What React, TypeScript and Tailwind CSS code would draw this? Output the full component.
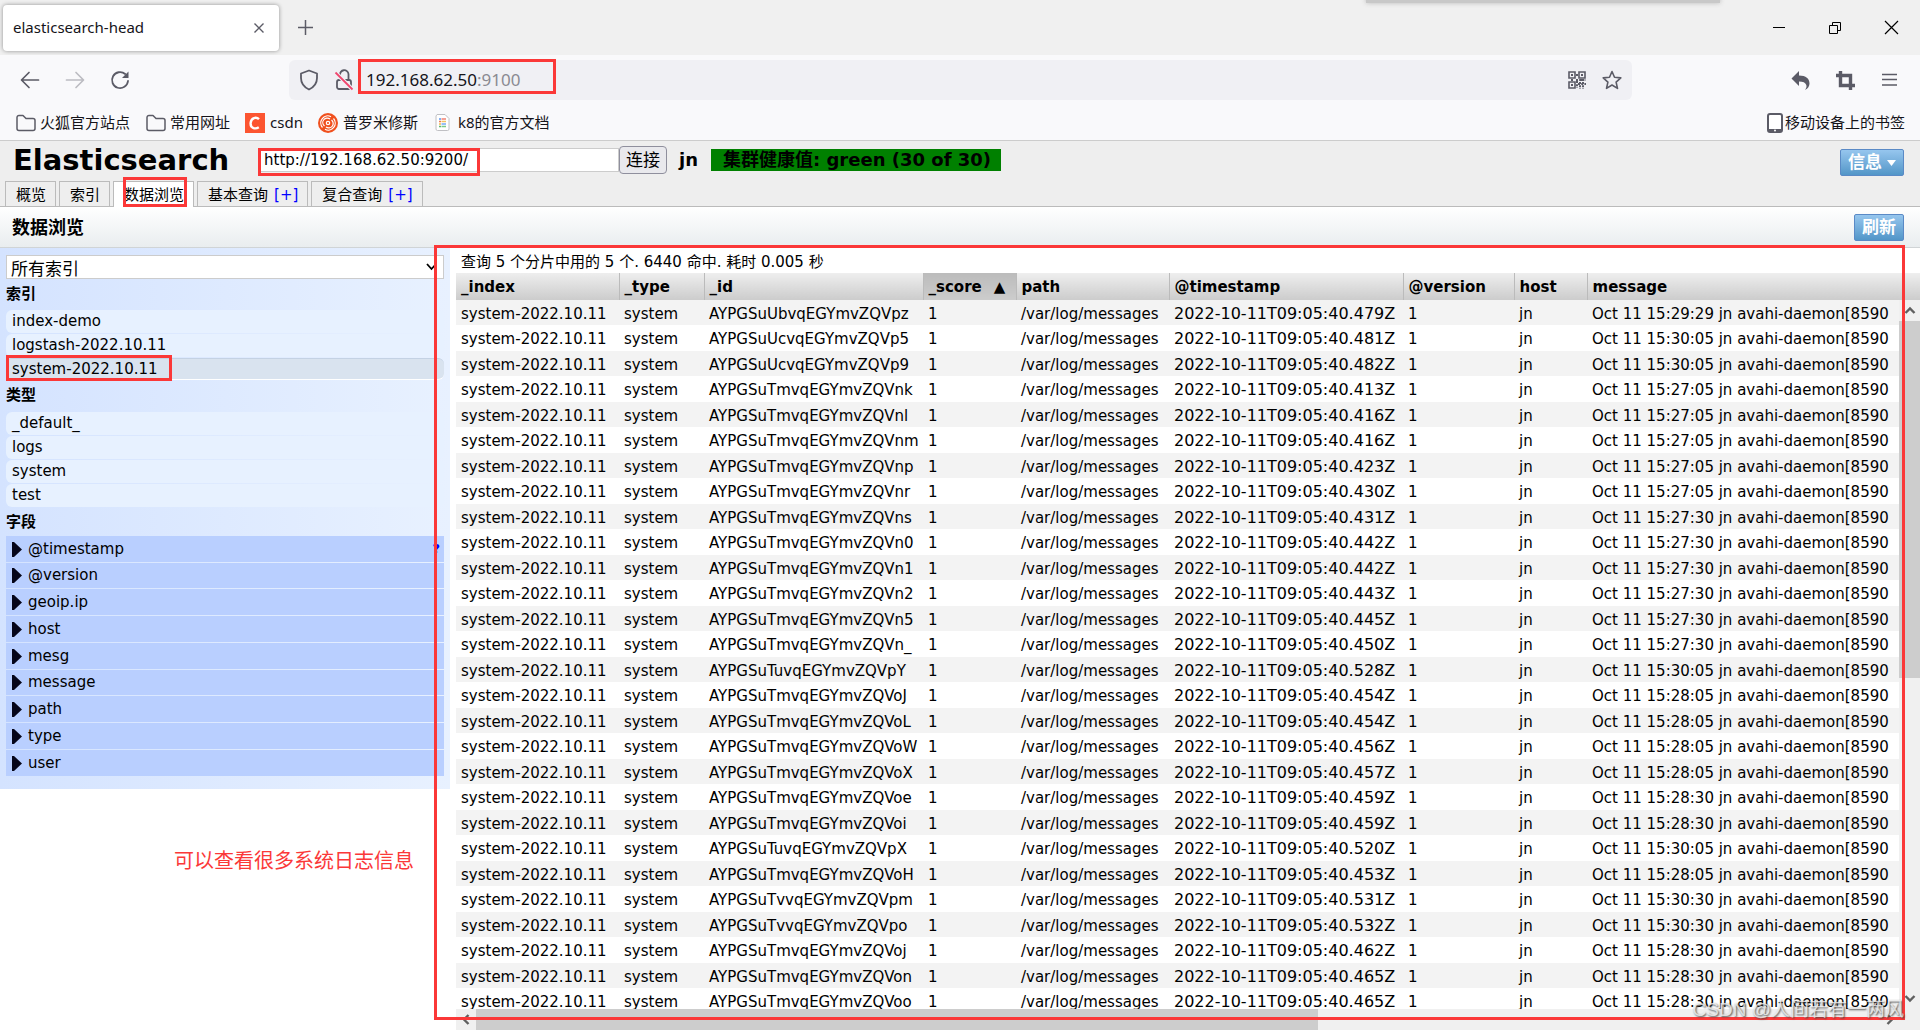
import type { ReactNode } from 'react';

const INDICES = ['index-demo', 'logstash-2022.10.11', 'system-2022.10.11'];
const TYPES = ['_default_', 'logs', 'system', 'test'];
const FIELDS = ['@timestamp', '@version', 'geoip.ip', 'host', 'mesg', 'message', 'path', 'type', 'user'];

// [id suffix, milliseconds part of @timestamp, time in the log line]
const HITS: [string, string, string][] = [
  ['UbvqEGYmvZQVpz', '479', '15:29:29'],
  ['UcvqEGYmvZQVp5', '481', '15:30:05'],
  ['UcvqEGYmvZQVp9', '482', '15:30:05'],
  ['TmvqEGYmvZQVnk', '413', '15:27:05'],
  ['TmvqEGYmvZQVnl', '416', '15:27:05'],
  ['TmvqEGYmvZQVnm', '416', '15:27:05'],
  ['TmvqEGYmvZQVnp', '423', '15:27:05'],
  ['TmvqEGYmvZQVnr', '430', '15:27:05'],
  ['TmvqEGYmvZQVns', '431', '15:27:30'],
  ['TmvqEGYmvZQVn0', '442', '15:27:30'],
  ['TmvqEGYmvZQVn1', '442', '15:27:30'],
  ['TmvqEGYmvZQVn2', '443', '15:27:30'],
  ['TmvqEGYmvZQVn5', '445', '15:27:30'],
  ['TmvqEGYmvZQVn_', '450', '15:27:30'],
  ['TuvqEGYmvZQVpY', '528', '15:30:05'],
  ['TmvqEGYmvZQVoJ', '454', '15:28:05'],
  ['TmvqEGYmvZQVoL', '454', '15:28:05'],
  ['TmvqEGYmvZQVoW', '456', '15:28:05'],
  ['TmvqEGYmvZQVoX', '457', '15:28:05'],
  ['TmvqEGYmvZQVoe', '459', '15:28:30'],
  ['TmvqEGYmvZQVoi', '459', '15:28:30'],
  ['TuvqEGYmvZQVpX', '520', '15:30:05'],
  ['TmvqEGYmvZQVoH', '453', '15:28:05'],
  ['TvvqEGYmvZQVpm', '531', '15:30:30'],
  ['TvvqEGYmvZQVpo', '532', '15:30:30'],
  ['TmvqEGYmvZQVoj', '462', '15:28:30'],
  ['TmvqEGYmvZQVon', '465', '15:28:30'],
  ['TmvqEGYmvZQVoo', '465', '15:28:30'],
];

function Mark({ className }: { className: string }) {
  return <div aria-hidden className={`pointer-events-none absolute border-3 border-[#fb3838] ${className}`} />;
}

function IconButton({ label, className = '', children }: { label: string; className?: string; children: ReactNode }) {
  return (
    <button aria-label={label} className={`flex shrink-0 items-center justify-center text-[#5b5b66] ${className}`}>
      {children}
    </button>
  );
}

function TabStrip() {
  return (
    <div className="relative flex h-[55px] shrink-0 items-center bg-[#f0f0f0] px-[3px]">
      <div className="absolute top-[-5px] right-[200px] h-2 w-[354px] bg-[#c8c8c8] shadow-[0_0_5px_#bbb]" />
      <div className="flex h-[46px] w-[276px] items-center justify-between rounded bg-white pr-[14px] pl-[10px] shadow-[0_0_4px_rgba(0,0,0,0.4)]">
        <span className="text-[15px] text-[#15141a]">elasticsearch-head</span>
        <IconButton label="关闭标签页">
          <svg width="12" height="12" viewBox="0 0 12 12" fill="none" stroke="currentColor" strokeWidth="1.4">
            <path d="M1.5 1.5l9 9M10.5 1.5l-9 9" />
          </svg>
        </IconButton>
      </div>
      <IconButton label="新标签页" className="ml-[18px]">
        <svg width="17" height="17" viewBox="0 0 17 17" fill="none" stroke="currentColor" strokeWidth="1.5">
          <path d="M8.5 1v15M1 8.5h15" />
        </svg>
      </IconButton>
      <div className="mr-[18px] ml-auto flex items-center gap-[42px]">
        <IconButton label="最小化" className="text-black!">
          <svg width="14" height="14" viewBox="0 0 14 14" stroke="currentColor"><path d="M1 6.500h12" /></svg>
        </IconButton>
        <IconButton label="还原" className="text-black!">
          <svg width="14" height="14" viewBox="0 0 14 14" fill="none" stroke="currentColor">
            <path d="M1.500 4.500h8v8h-8zM4.500 4.500v-3h8v8h-3" />
          </svg>
        </IconButton>
        <IconButton label="关闭" className="text-black!">
          <svg width="15" height="15" viewBox="0 0 15 15" fill="none" stroke="currentColor" strokeWidth="1.200">
            <path d="M1 1l13 13M14 1L1 14" />
          </svg>
        </IconButton>
      </div>
    </div>
  );
}

function AddressBar() {
  return (
    <div className="relative flex h-[50px] shrink-0 items-center bg-[#f9f9fb] pr-[21px] pl-5">
      <IconButton label="后退">
        <svg width="20" height="20" viewBox="0 0 20 20" fill="none" stroke="currentColor" strokeWidth="1.700" strokeLinecap="round" strokeLinejoin="round">
          <path d="M18.500 10H2M9 2.500L1.500 10 9 17.500" />
        </svg>
      </IconButton>
      <IconButton label="前进" className="ml-[25px] text-[#bcbcc2]!">
        <svg width="20" height="20" viewBox="0 0 20 20" fill="none" stroke="currentColor" strokeWidth="1.700" strokeLinecap="round" strokeLinejoin="round">
          <path d="M1.500 10H18M11 2.500l7.500 7.500-7.500 7.500" />
        </svg>
      </IconButton>
      <IconButton label="刷新页面" className="ml-[25px]">
        <svg width="20" height="20" viewBox="0 0 20 20" fill="none" stroke="currentColor" strokeWidth="1.800" strokeLinecap="round">
          <path d="M18 11a8 8 0 1 1-2.800-7" />
          <path d="M18.500 1.500v6.500h-6.500z" fill="currentColor" stroke="none" />
        </svg>
      </IconButton>
      <div className="ml-[159px] flex h-10 flex-1 items-center rounded-md bg-[#f0f0f4] px-[10px]">
        <IconButton label="跟踪保护">
          <svg width="20" height="22" viewBox="0 0 20 22" fill="none" stroke="currentColor" strokeWidth="1.800" strokeLinejoin="round">
            <path d="M10 1.500l8 3v4.500c0 5-2.800 9-8 11.500C4.800 18 2 14 2 9V4.500z" />
          </svg>
        </IconButton>
        <IconButton label="连接不安全" className="ml-[15px]">
          <svg width="20" height="22" viewBox="0 0 20 22" fill="none" stroke="currentColor" strokeWidth="1.800">
            <rect x="3" y="11" width="14" height="9" rx="2" />
            <path d="M6 11V6a4 4 0 0 1 8.500-1v6" />
            <path d="M1.500 3.500L18.500 20.500" stroke="#f0f0f4" strokeWidth="4" />
            <path d="M1.500 3.500L18.500 20.500" stroke="#f0466e" />
          </svg>
        </IconButton>
        <p className="ml-3 flex-1 text-[17px] text-[#15141a]">
          192.168.62.50<span className="text-[#8a8a92]">:9100</span>
        </p>
        <IconButton label="二维码">
          <svg width="18" height="18" viewBox="0 0 18 18" fill="none" stroke="currentColor" strokeWidth="1.600">
            <path d="M1 1h6v6H1zM11 1h6v6h-6zM1 11h6v6H1z" />
            <path d="M3 4h2M13 4h2M3 14h2M8 4h2M4 8v2M8 9h10M14 8v2M9 10v7M10 13h8M12 11v7M15 11v7" strokeWidth="2" strokeDasharray="2 1.200" />
          </svg>
        </IconButton>
        <IconButton label="收藏" className="ml-4">
          <svg width="20" height="20" viewBox="0 0 20 20" fill="none" stroke="currentColor" strokeWidth="1.600" strokeLinejoin="round">
            <path d="M10 1.500l2.500 5.800 6.300.6-4.700 4.200 1.400 6.300L10 15l-5.500 3.400 1.400-6.300L1.200 7.900l6.300-.6z" />
          </svg>
        </IconButton>
      </div>
      <div className="ml-[159px] flex items-center gap-[26px]">
        <IconButton label="撤销">
          <svg width="19" height="19" viewBox="0 0 19 19" fill="currentColor">
            <path d="M8 0v4.500c7 0 10.500 3 10.500 8 0 2.500-1.500 5-4.500 6.500 1.500-2 1.800-3.500 1.300-5C14.500 11.500 12 10.500 8 10.500V15L.5 7.500z" />
          </svg>
        </IconButton>
        <IconButton label="截图">
          <svg width="19" height="19" viewBox="0 0 19 19" fill="none" stroke="currentColor" strokeWidth="3.400">
            <path d="M4.500 0v14.500H19M0 4.500h14.500V19" />
          </svg>
        </IconButton>
        <IconButton label="菜单">
          <svg width="18" height="18" viewBox="0 0 18 18" stroke="currentColor" strokeWidth="1.500">
            <path d="M1 3.500h15M1 8.500h15M1 14h15" />
          </svg>
        </IconButton>
      </div>
      <Mark className="top-1 left-[358px] h-[35px] w-[198px]" />
    </div>
  );
}

function Folder() {
  return (
    <svg width="20" height="18" viewBox="0 0 20 18" fill="none" stroke="#5b5b66" strokeWidth="1.500" strokeLinejoin="round">
      <path d="M1 3.500a2 2 0 0 1 2-2h4l3 3h7a2 2 0 0 1 2 2V14.500a2 2 0 0 1-2 2H3a2 2 0 0 1-2-2z" />
    </svg>
  );
}

function BookmarkBar() {
  return (
    <nav aria-label="书签" className="flex h-[35px] shrink-0 items-center bg-[#f9f9fb] pr-[15px] pl-4 text-[15px] text-[#15141a]">
      <a href="#" className="flex items-center gap-1"><Folder />火狐官方站点</a>
      <a href="#" className="ml-4 flex items-center gap-1"><Folder />常用网址</a>
      <a href="#" className="ml-[15px] flex items-center gap-[5px]">
        <svg width="20" height="20" viewBox="0 0 20 20">
          <rect width="20" height="20" fill="#fc5531" />
          <path d="M14 6.200C11.500 3.800 6 4.200 5.600 10.200c-.2 5.600 5.200 6 8.200 4" fill="none" stroke="#fff" strokeWidth="2.400" />
        </svg>
        csdn
      </a>
      <a href="#" className="ml-[15px] flex items-center gap-[5px]">
        <svg width="20" height="20" viewBox="0 0 20 20" fill="none" stroke="#fff" strokeWidth="1.200">
          <circle cx="10" cy="10" r="10" fill="#f0501e" stroke="none" />
          <path d="M4.500 14.500A7 7 0 0 1 13 3.700M15.500 5.500A7 7 0 0 1 7 16.300" />
          <path d="M6.500 13a4.300 4.300 0 0 1 5.500-7M13.500 7a4.300 4.300 0 0 1-5.500 7" />
          <circle cx="10" cy="10" r="1.700" />
        </svg>
        普罗米修斯
      </a>
      <a href="#" className="ml-[17px] flex items-center gap-2">
        <svg width="15" height="17" viewBox="0 0 15 17" fill="none">
          <path d="M2 .5h8l4 4V15a1.500 1.500 0 0 1-1.500 1.500h-10A1.500 1.500 0 0 1 1 15V2z" fill="#fff" stroke="#c0c0c4" />
          <g strokeWidth="1.500">
            <path d="M4 5h2" stroke="#5a96f0" /><path d="M6.500 5H11" stroke="#f08070" />
            <path d="M4 7.500h2" stroke="#e8785a" /><path d="M6.500 7.500H11" stroke="#f4c060" />
            <path d="M4 10h2" stroke="#f4b84c" /><path d="M6.500 10H11" stroke="#74a8f4" />
            <path d="M4 12.500h2" stroke="#60b870" /><path d="M6.500 12.500H11" stroke="#7cc888" />
          </g>
        </svg>
        k8的官方文档
      </a>
      <a href="#" className="ml-auto flex items-center gap-0.5">
        <svg width="16" height="20" viewBox="0 0 16 20">
          <rect x="1" y="1" width="14" height="18" rx="2" fill="#fff" stroke="#5b5b66" strokeWidth="2" />
          <path d="M1 16h14v3H1z" fill="#5b5b66" /><circle cx="8" cy="17.500" r="1" fill="#fff" />
        </svg>
        移动设备上的书签
      </a>
    </nav>
  );
}

const BLUE_BUTTON =
  'flex h-[27px] items-center rounded-xs border border-[#5a8ac6] bg-linear-to-b from-[#96c6ee] to-[#5296c8] px-[7px] pt-0.5 text-[17px] font-bold text-white';

function AppHeader() {
  const tab = 'flex h-[25px] items-center gap-1.5 border border-b-0 border-[#bbb] pt-0.5 pr-[9px] pl-[10px]';
  return (
    <header className="relative flex h-[67px] shrink-0 flex-col justify-between border-t border-b border-t-[#ccc] border-b-[#bbb] bg-[#eee]">
      <div className="flex h-[38px] items-center pr-4 pl-[13px]">
        <h1 className="w-[246px] text-[29px] leading-9 font-bold">Elasticsearch</h1>
        <input
          aria-label="集群地址"
          defaultValue="http://192.168.62.50:9200/"
          className="h-6 w-[360px] border border-[#ccc] bg-white px-1 text-[15px] outline-none"
        />
        <button className="h-7 w-12 rounded-sm border border-[#8f8f9d] bg-[#e9e9ed] text-[17px] leading-6">连接</button>
        <span className="ml-3 w-8 text-lg leading-6 font-bold">jn</span>
        <span className="flex h-[22px] items-center bg-[#008000] pr-[10px] pl-3 text-lg leading-5 font-bold whitespace-pre">集群健康值: green (30 of 30)</span>
        <button className={`${BLUE_BUTTON} mt-1 ml-auto gap-[5px]`}>
          信息
          <svg width="9" height="6" viewBox="0 0 9 6" fill="currentColor"><path d="M0 0h9L4.500 6z" /></svg>
        </button>
      </div>
      <nav aria-label="视图" className="flex gap-[3px] pl-[5px] text-[15px]">
        <button className={tab}>概览</button>
        <button className={tab}>索引</button>
        <button className={`${tab} -mb-px h-[26px]! bg-white`}>数据浏览</button>
        <div className={tab}><button>基本查询</button><a href="#" className="text-[#0000ff]">[+]</a></div>
        <div className={tab}><button>复合查询</button><a href="#" className="text-[#0000ff]">[+]</a></div>
      </nav>
      <Mark className="top-[7px] left-[258px] h-[28px] w-[222px]" />
      <Mark className="top-[36px] left-[123px] h-[30px] w-[64px]" />
    </header>
  );
}

function Sidebar() {
  const item = 'mb-px block h-[23px] w-full rounded-md bg-[#e7f1ff] px-1.5 text-left leading-[23px]';
  return (
    <aside className="relative h-[541px] w-[450px] shrink-0 bg-linear-to-r from-[#d4e3ff] to-[#e8f1ff] px-1.5 pt-[7px] text-[15px]">
      <div className="relative">
        <select aria-label="索引范围" className="block h-6 w-full appearance-none border border-[#ccc] bg-white px-1 pt-0.5 text-[17px] leading-[22px]">
          <option>所有索引</option>
        </select>
        <svg className="pointer-events-none absolute top-2 right-[7px]" width="11" height="8" viewBox="0 0 11 8" fill="none" stroke="#000" strokeWidth="1.800">
          <path d="M1 1l4.500 5L10 1" />
        </svg>
      </div>
      <h2 className="mb-[5px] h-[26px] leading-[30px] font-bold">索引</h2>
      {INDICES.map((name) => (
        <button key={name} className={name.startsWith('system') ? 'block h-[22px] w-full rounded-md border-t border-b border-t-[#c4d2e4] border-b-white bg-[#d9e3ef] px-1.5 text-left leading-5' : item}>
          {name}
        </button>
      ))}
      <h2 className="mb-[6px] h-[26px] leading-[30px] font-bold">类型</h2>
      {TYPES.map((name) => (
        <button key={name} className={item}>{name}</button>
      ))}
      <h2 className="mb-1 h-6 leading-7 font-bold">字段</h2>
      {FIELDS.map((name, i) => (
        <button
          key={name}
          className={`mb-px flex w-full items-center gap-1.5 bg-[#b9cfff] px-1.5 ${i % 4 === 1 ? 'h-[25px]' : 'h-[26px]'}`}
        >
          <svg width="10" height="15" viewBox="0 0 10 15" fill="#06061a"><path d="M0 0h2l8 7.500L2 15H0z" /></svg>
          {name}
          {i === 0 && <span className="-mr-0.5 ml-auto text-[13px] font-bold text-[#0000ff]">?</span>}
        </button>
      ))}
      <Mark className="top-[107px] left-1.5 h-[26px] w-[166px]" />
    </aside>
  );
}

const COLUMNS: [string, string][] = [
  ['_index', 'w-[163px]'],
  ['_type', 'w-[85px]'],
  ['_id', 'w-[219px]'],
  ['_score', 'w-[93px]'],
  ['path', 'w-[153px]'],
  ['@timestamp', 'w-[234px]'],
  ['@version', 'w-[111px]'],
  ['host', 'w-[73px]'],
  ['message', ''],
];

function Arrow({ className = '' }: { className?: string }) {
  return (
    <svg className={className} width="12" height="9" viewBox="0 0 12 9" fill="none" stroke="#606060" strokeWidth="2.400">
      <path d="M1.500 7L6 2.500 10.500 7" />
    </svg>
  );
}

function Results() {
  return (
    <main className="relative flex min-w-0 flex-1 flex-col pl-1.5">
      <p className="h-[25px] pl-[5px] text-[15px] leading-[29px]">查询 5 个分片中用的 5 个. 6440 命中. 耗时 0.005 秒</p>
      <div className="relative min-h-0 flex-1 overflow-hidden">
        <table className="w-full table-fixed border-collapse text-[15px]">
          <thead>
            <tr className="h-[27px]">
              {COLUMNS.map(([name, width], i) => (
                <th
                  key={name}
                  scope="col"
                  className={`${width} p-0 pt-0.5 pl-[5px] text-left leading-[25px] whitespace-nowrap ${i > 0 ? 'border-l border-[#bbb]' : ''} ${name === '_score' ? 'bg-linear-to-b from-[#bbb] to-[#ccc]' : 'bg-linear-to-b from-[#eee] to-[#ccc]'}`}
                >
                  {name}
                  {name === '_score' && <span className="ml-3">▲</span>}
                </th>
              ))}
            </tr>
          </thead>
          <tbody>
            {HITS.map(([id, ms, time]) => (
              <tr key={id} className="h-[25px] whitespace-nowrap odd:bg-[#f3f3f3] even:h-[26px] *:p-0 *:pt-0.5 *:pl-[5px] *:leading-[22px]">
                <td>system-2022.10.11</td>
                <td>system</td>
                <td>AYPGSu{id}</td>
                <td>1</td>
                <td>/var/log/messages</td>
                <td className="text-base">2022-10-11T09:05:40.{ms}Z</td>
                <td>1</td>
                <td>jn</td>
                <td>Oct 11 {time} jn avahi-daemon[8590</td>
              </tr>
            ))}
          </tbody>
        </table>
        <div className="absolute top-[27px] right-0 bottom-0 flex w-[21px] flex-col items-center bg-[#f0f0f0]">
          <Arrow className="my-1.5 shrink-0" />
          <div className="h-[357px] w-full bg-[#cdcdcd]" />
          <Arrow className="mt-auto mb-1.5 rotate-180" />
        </div>
      </div>
      <div className="flex h-[21px] shrink-0 items-center bg-[#f0f0f0]">
        <Arrow className="mx-1 -rotate-90" />
        <div className="h-full w-23/40 bg-[#cdcdcd]" />
        <Arrow className="mr-6 ml-auto rotate-90" />
      </div>
      <Mark className="top-[-3px] right-[15px] bottom-[10px] -left-4" />
      <p className="absolute right-4 bottom-1.5 font-['Liberation_Sans','Noto_Sans_CJK_SC',sans-serif] text-[19px] leading-7 text-[#f4f4f4]/80 [text-shadow:1px_1px_2px_#444]">
        CSDN @人间若有一两风
      </p>
    </main>
  );
}

export default function App() {
  return (
    <div className="flex h-screen flex-col overflow-hidden bg-white font-['DejaVu_Sans','Noto_Sans_CJK_SC',sans-serif] text-black">
      <div className="shrink-0 font-['Noto_Sans','Noto_Sans_CJK_SC',sans-serif]">
        <TabStrip />
        <AddressBar />
        <BookmarkBar />
      </div>
      <AppHeader />
      <div className="flex h-[41px] shrink-0 items-center justify-between border-b border-[#d0d4d6] bg-linear-to-b from-white to-[#e9edef] pr-4 pl-3">
        <h2 className="pt-0.5 text-lg font-bold">数据浏览</h2>
        <button className={BLUE_BUTTON}>刷新</button>
      </div>
      <div className="relative flex min-h-0 flex-1">
        <Sidebar />
        <Results />
        <p className="absolute top-[599px] left-[174px] text-[20px] leading-7 text-[#fb3838]">可以查看很多系统日志信息</p>
      </div>
    </div>
  );
}
